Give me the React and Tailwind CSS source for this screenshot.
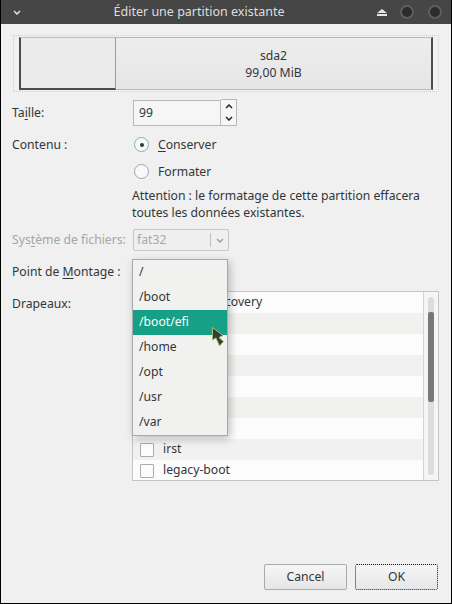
// App.jsx - Calamares : Éditer une partition existante (Breeze)
import { useState } from 'react';

const mountPoints = ['/', '/boot', '/boot/efi', '/home', '/opt', '/usr', '/var'];
const flags = [
  'apple-tv-recovery',
  'bios-grub',
  'boot',
  'diagnostic',
  'esp',
  'hidden',
  'hpservice',
  'irst',
  'legacy-boot',
];

function Chevron({ down = true, className = '' }) {
  return (
    <svg width="8" height="5" viewBox="0 0 8 5" className={className}>
      <path
        d={down ? 'M1 1 L4 4 L7 1' : 'M1 4 L4 1 L7 4'}
        fill="none"
        stroke="currentColor"
        strokeWidth="1.5"
      />
    </svg>
  );
}

function Label({ children, disabled }) {
  return (
    <div className={`w-[120px] shrink-0 whitespace-nowrap ${disabled ? 'text-[#a4a6a8]' : ''}`}>{children}</div>
  );
}

export default function App() {
  const [content, setContent] = useState('keep');

  return (
    <div className="w-[452px] h-[604px] flex flex-col border-x border-b border-black bg-[#eff0ef] text-[12.2px] text-[#31363b] font-['Noto_Sans',sans-serif] overflow-hidden">
      {/* Barre de titre */}
      <div className="h-[24px] shrink-0 flex items-center bg-[#464646] text-[#dedede]">
        <div className="w-[24px] pl-[12px] flex items-center">
          <Chevron className="text-[#e0e0e0]" />
        </div>
        <div className="flex-1 text-center leading-none text-[12.5px]">Éditer une partition existante</div>
        <div className="w-[78px] flex items-center gap-[13px] pl-[4px]">
          <svg width="10" height="7" viewBox="0 0 10 7">
            <path d="M5 0 L10 4 L0 4 Z" fill="#e6e6e6" />
            <rect x="0" y="5" width="10" height="2" fill="#e6e6e6" />
          </svg>
          <span className="w-[14px] h-[14px] rounded-full bg-[#2c2c2c] border-2 border-[#5e5e5e]" />
          <span className="w-[14px] h-[14px] rounded-full bg-[#2c2c2c] border-2 border-[#5e5e5e] ml-[1px]" />
        </div>
      </div>

      {/* Barre de partition */}
      <div className="mt-[11px] mx-[12px] h-[57px] shrink-0 border border-dotted border-[#cfd0cf] px-[5px] py-[1px] flex">
        <div className="w-[97px] bg-[#ebebeb] border-l-2 border-b-2 border-[#4b4b4b] border-t border-t-[#bdbdbd] border-r border-r-[#9a9a9a]" />
        <div className="flex-1 flex flex-col items-center justify-center leading-[17px] bg-gradient-to-b from-[#ededed] to-[#e6e6e6] border-y border-[#b9b9b9] border-r-2 border-r-[#4b4b4b]">
          <span>sda2</span>
          <span>99,00 MiB</span>
        </div>
      </div>

      <div className="pl-[11px] pr-[12px] flex flex-col">
        {/* Taille */}
        <div className="mt-[8px] h-[26px] flex items-center">
          <Label>
            Ta<span className="underline underline-offset-2">i</span>lle:
          </Label>
          <div className="flex items-stretch h-[26px] ml-px">
            <div className="w-[88px] border border-[#b7b8b9] bg-[#f6f6f6] pl-[5px] flex items-center">99</div>
            <div className="w-[16px] border border-l-0 border-[#b7b8b9] bg-[#f6f6f6] flex flex-col items-center justify-around text-[#232629] -mt-px">
              <Chevron down={false} />
              <Chevron />
            </div>
          </div>
        </div>

        {/* Contenu */}
        <div className="mt-[6px] h-[26px] flex items-center">
          <Label>Contenu :</Label>
          <button
            className="flex items-center gap-[9px] pl-[2px]"
            onClick={() => setContent('keep')}
          >
            <span className="w-[15px] h-[15px] rounded-full border border-[#79b9aa] bg-[#f8f8f8] flex items-center justify-center">
              {content === 'keep' && <span className="w-[4px] h-[4px] rounded-full bg-[#31363b]" />}
            </span>
            <span>
              <span className="underline underline-offset-2">C</span>onserver
            </span>
          </button>
        </div>
        <div className="mt-[1px] h-[26px] flex items-center">
          <Label />
          <button
            className="flex items-center gap-[9px] pl-[2px]"
            onClick={() => setContent('format')}
          >
            <span className="w-[15px] h-[15px] rounded-full border border-[#a3a5a7] bg-[#f8f8f8] flex items-center justify-center">
              {content === 'format' && <span className="w-[4px] h-[4px] rounded-full bg-[#31363b]" />}
            </span>
            <span>Formater</span>
          </button>
        </div>
        <div className="mt-[2px] flex">
          <Label />
          <p className="leading-[17px] w-[300px]">
            Attention : le formatage de cette partition effacera toutes les données existantes.
          </p>
        </div>

        {/* Système de fichiers */}
        <div className="mt-[8px] h-[22px] flex items-center">
          <Label disabled>
            Sys<span className="underline underline-offset-2">t</span>ème de fichiers:
          </Label>
          <div className="ml-px w-[96px] h-[22px] border border-[#c6c7c8] rounded-[2px] bg-[#efefef] flex items-center text-[#a7a9ab]">
            <span className="flex-1 pl-[3px]">fat32</span>
            <span className="w-px h-[14px] bg-[#c0c1c2]" />
            <span className="w-[17px] flex justify-center text-[#a0a2a4]">
              <Chevron />
            </span>
          </div>
        </div>

        {/* Point de montage */}
        <div className="mt-[10px] h-[22px] flex items-center">
          <Label>
            Point de <span className="underline underline-offset-2">M</span>ontage :
          </Label>
          <div className="relative w-[96px] h-[22px]">
            <div className="absolute left-0 top-[-2px] z-10 w-[96px] bg-[#f1f2f0] border border-[#a8a9a8] shadow-[2px_3px_8px_rgba(0,0,0,0.25)]">
              {mountPoints.map((m) => (
                <div
                  key={m}
                  className={`h-[25px] pl-[6px] flex items-center ${
                    m === '/boot/efi' ? 'bg-[#16a085] text-white' : ''
                  }`}
                >
                  {m}
                </div>
              ))}
              {/* curseur */}
              <svg
                width="14"
                height="22"
                viewBox="0 0 14 22"
                className="absolute left-[78px] top-[66px]"
              >
                <path
                  d="M1.5 1.5 L1.5 14 L5 12 L8.5 20 L12.5 15.5 L8 11.5 L12 9.5 Z"
                  fill="#3b3b3b"
                  stroke="#9fc26f"
                  strokeWidth="1"
                  strokeLinejoin="round"
                />
              </svg>
            </div>
          </div>
        </div>

        {/* Drapeaux */}
        <div className="mt-[8px] flex items-start">
          <Label>
            <div className="pt-[4px]">Drapeaux:</div>
          </Label>
          <div className="w-[308px] h-[190px] border border-[#c4c6c4] flex overflow-hidden">
            <div className="flex-1 flex flex-col">
              {flags.map((f, i) => (
                <div
                  key={f}
                  className={`h-[21px] shrink-0 pl-[7px] flex items-center gap-[9px] ${
                    i % 2 === 0 ? 'bg-[#fcfcfc]' : 'bg-[#f1f2f0]'
                  }`}
                >
                  <span className="w-[14px] h-[14px] border border-[#a9abad] bg-[#fcfcfc] rounded-[1px]" />
                  <span>{f}</span>
                </div>
              ))}
            </div>
            <div className="w-[15px] border-l border-[#d3d4d3] bg-[#f4f5f4] py-[5px] flex justify-center">
              <div className="w-[6px] h-full rounded-full bg-[#dcdddc] pt-[15px]">
                <div className="w-[6px] h-[90px] rounded-[2px] bg-[#777878]" />
              </div>
            </div>
          </div>
        </div>
      </div>

      <div className="flex-1" />

      {/* Boutons */}
      <div className="flex justify-end gap-[8px] pr-[13px] pb-[13px]">
        <button className="w-[83px] h-[26px] border border-[#a9aaab] rounded-[2px] bg-gradient-to-b from-[#f6f6f6] to-[#e6e6e6]">
          Cancel
        </button>
        <button className="w-[83px] h-[26px] border border-dotted border-[#1d1d1d] rounded-[2px] bg-gradient-to-b from-[#f6f6f6] to-[#e6e6e6]">
          OK
        </button>
      </div>
    </div>
  );
}
